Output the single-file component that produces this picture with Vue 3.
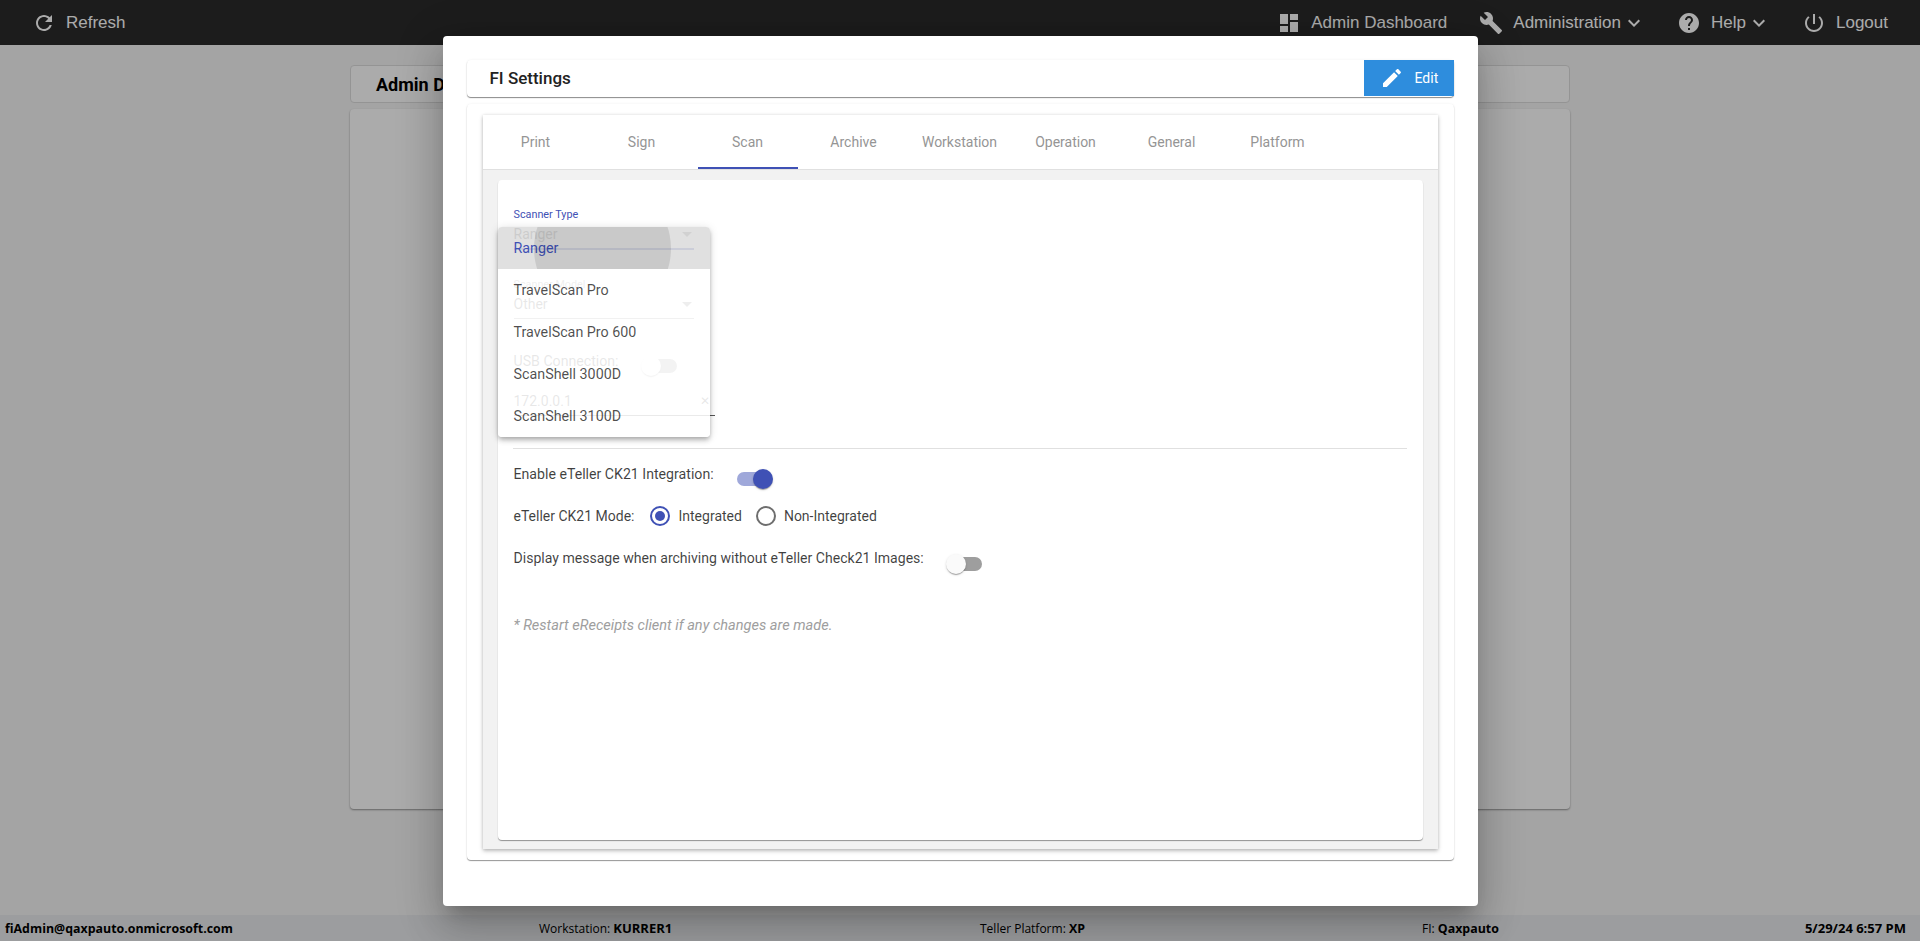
<script setup>
const tabs = ['Print', 'Sign', 'Scan', 'Archive', 'Workstation', 'Operation', 'General', 'Platform']
const scanners = ['Ranger', 'TravelScan Pro', 'TravelScan Pro 600', 'ScanShell 3000D', 'ScanShell 3100D']
</script>

<template>
<div class="page">
  <header class="topbar">
    <div class="nav-item">
      <svg class="icon" viewBox="0 0 24 24"><path d="M17.65 6.35C16.2 4.9 14.21 4 12 4c-4.42 0-7.99 3.58-7.99 8s3.57 8 7.99 8c3.73 0 6.84-2.55 7.73-6h-2.08c-.82 2.33-3.04 4-5.65 4-3.31 0-6-2.69-6-6s2.69-6 6-6c1.66 0 3.14.69 4.22 1.78L13 11h7V4l-2.35 2.35z"/></svg>
      <span>Refresh</span>
    </div>
    <nav class="nav-right">
      <div class="nav-item dash">
        <svg class="icon" viewBox="0 0 24 24"><path d="M3 13h8V3H3v10zm0 8h8v-6H3v6zm10 0h8V11h-8v10zm0-18v6h8V3h-8z"/></svg>
        <span>Admin Dashboard</span>
      </div>
      <div class="nav-item">
        <svg class="icon" viewBox="0 0 24 24"><path d="M22.7 19l-9.1-9.1c.9-2.3.4-5-1.5-6.9-2-2-5-2.4-7.4-1.3L9 6 6 9 1.6 4.7C.4 7.1.9 10.1 2.9 12.1c1.9 1.9 4.6 2.4 6.9 1.5l9.1 9.1c.4.4 1 .4 1.4 0l2.3-2.3c.5-.4.5-1.1.1-1.4z"/></svg>
        <span>Administration</span>
        <svg class="chevron" viewBox="0 0 24 24"><path d="M7.41 8.59L12 13.17l4.59-4.58L18 10l-6 6-6-6 1.41-1.41z"/></svg>
      </div>
      <div class="nav-item">
        <svg class="icon" viewBox="0 0 24 24"><path d="M12 2C6.48 2 2 6.48 2 12s4.48 10 10 10 10-4.48 10-10S17.52 2 12 2zm1 17h-2v-2h2v2zm2.07-7.75l-.9.92C13.45 12.9 13 13.5 13 15h-2v-.5c0-1.1.45-2.1 1.17-2.83l1.24-1.26c.37-.36.59-.86.59-1.41 0-1.1-.9-2-2-2s-2 .9-2 2H8c0-2.21 1.79-4 4-4s4 1.79 4 4c0 .88-.36 1.68-.93 2.25z"/></svg>
        <span>Help</span>
        <svg class="chevron" viewBox="0 0 24 24"><path d="M7.41 8.59L12 13.17l4.59-4.58L18 10l-6 6-6-6 1.41-1.41z"/></svg>
      </div>
      <div class="nav-item">
        <svg class="icon" viewBox="0 0 24 24"><path d="M13 3h-2v10h2V3zm4.83 2.17l-1.42 1.42C17.99 7.86 19 9.81 19 12c0 3.87-3.13 7-7 7s-7-3.13-7-7c0-2.19 1.01-4.14 2.58-5.42L6.17 5.17C4.23 6.82 3 9.26 3 12c0 4.97 4.03 9 9 9s9-4.03 9-9c0-2.74-1.23-5.18-3.17-6.83z"/></svg>
        <span>Logout</span>
      </div>
    </nav>
  </header>

  <main class="content">
    <div class="crumb-card">Admin Dashboard</div>
    <div class="main-card"></div>
  </main>

  <footer class="statusbar">
    <b class="user">fiAdmin@qaxpauto.onmicrosoft.com</b>
    <span>Workstation: <b class="wide">KURRER1</b></span>
    <span>Teller Platform: <b>XP</b></span>
    <span>FI: <b>Qaxpauto</b></span>
    <b class="wide">5/29/24 6:57 PM</b>
  </footer>

  <div class="overlay">
    <section class="modal">
      <div class="title-card">
        <h2>FI Settings</h2>
        <button class="edit-btn">
          <svg viewBox="0 0 24 24"><path d="M3 17.25V21h3.75L17.81 9.94l-3.75-3.75L3 17.25zM20.71 7.04c.39-.39.39-1.02 0-1.41l-2.34-2.34c-.39-.39-1.02-.39-1.41 0l-1.83 1.83 3.75 3.75 1.83-1.83z"/></svg>
          Edit
        </button>
      </div>

      <div class="settings-card">
        <div class="tab-card">
          <div class="tabs">
            <div v-for="t in tabs" :key="t" class="tab" :class="{ active: t === 'Scan' }">{{ t }}</div>
          </div>
          <div class="tab-body">
            <div class="form-card">
              <div class="field">
                <div class="field-label blue">Scanner Type</div>
                <div class="field-value">Ranger<i class="arrow"></i></div>
                <div class="line blue-line"></div>
              </div>
              <div class="field second">
                <div class="field-label">Scanner Model</div>
                <div class="field-value">Other<i class="arrow"></i></div>
                <div class="line"></div>
              </div>
              <div class="row usb">
                <span>USB Connection:</span>
                <span class="toggle"><i class="thumb"></i></span>
              </div>
              <div class="ip-field">
                <div class="field-value">172.0.0.1<span class="clear">✕</span></div>
                <div class="line dark"></div>
              </div>

              <div class="divider"></div>

              <div class="row enable">
                <span>Enable eTeller CK21 Integration:</span>
                <span class="toggle on"><i class="thumb"></i></span>
              </div>
              <div class="row mode">
                <span>eTeller CK21 Mode:</span>
                <span class="radio checked"></span>
                <span>Integrated</span>
                <span class="radio second-radio"></span>
                <span class="radio-text">Non-Integrated</span>
              </div>
              <div class="row archive">
                <span>Display message when archiving without eTeller Check21 Images:</span>
                <span class="toggle"><i class="thumb"></i></span>
              </div>
              <p class="note">* Restart eReceipts client if any changes are made.</p>

              <div class="dropdown">
                <div v-for="(s, i) in scanners" :key="s" class="option" :class="{ selected: i === 0 }">
                  {{ s }}
                  <i v-if="i === 0" class="ripple"></i>
                </div>
              </div>
            </div>
          </div>
        </div>
      </div>
    </section>
  </div>
</div>
</template>

<style>
html, body { margin: 0; }
body { overflow: hidden; }
</style>

<style scoped>
* { box-sizing: border-box; }

.page {
  height: 941px;
  display: flex;
  flex-direction: column;
  background: #f5f5f5;
  font-family: Roboto, sans-serif;
  position: relative;
  overflow: hidden;
}

.topbar {
  height: 45px;
  flex: none;
  background: #2b2b2b;
  color: #fff;
  display: flex;
  align-items: center;
  justify-content: space-between;
  padding: 0 32px;
  font-family: "Liberation Sans", sans-serif;
  font-size: 17px;
}

.nav-right {
  display: flex;
  gap: 31px;
}

.nav-item {
  display: flex;
  align-items: center;
  gap: 10px;
}

.nav-item.dash {
  margin-right: 1px;
}

.icon {
  width: 24px;
  height: 24px;
  fill: #fff;
  flex: none;
}

.chevron {
  width: 24px;
  height: 24px;
  fill: #fff;
  flex: none;
  margin-left: -9px;
}

.content {
  flex: 1;
  width: 1220px;
  margin: 0 auto;
  padding-top: 20px;
}

.crumb-card {
  height: 38px;
  background: #fff;
  border: 1px solid #ddd;
  border-radius: 4px;
  padding-left: 25px;
  line-height: 38px;
  font-size: 18px;
  font-weight: 700;
  color: #000;
}

.main-card {
  height: 700px;
  margin-top: 6px;
  background: #fff;
  border-radius: 4px;
  box-shadow: 0 1px 2px rgba(0,0,0,0.4);
}

.statusbar {
  height: 26px;
  flex: none;
  background: #e9ebee;
  display: grid;
  grid-template-columns: 534px 441px 442px 1fr auto;
  align-items: center;
  padding: 0 14px 0 5px;
  font-family: "Open Sans", sans-serif;
  font-size: 12px;
  color: #000;
}

.statusbar b {
  font-size: 12.4px;
}

.statusbar b.wide {
  font-size: 13px;
}

.overlay {
  position: absolute;
  inset: 0;
  background: rgba(0,0,0,0.33);
  display: flex;
  justify-content: center;
  align-items: flex-start;
  padding-top: 36px;
}

.modal {
  width: 1035px;
  height: 870px;
  background: #fff;
  border-radius: 4px;
  padding: 24px;
  box-shadow: 0 11px 15px -7px rgba(0,0,0,0.2), 0 24px 38px 3px rgba(0,0,0,0.14), 0 9px 46px 8px rgba(0,0,0,0.12);
}

.title-card {
  height: 37px;
  display: flex;
  align-items: flex-start;
  justify-content: space-between;
  border-radius: 4px;
  box-shadow: 0 1px 1px rgba(0,0,0,0.45), 0 0 3px rgba(0,0,0,0.06);
}

.title-card h2 {
  margin: 0;
  padding-left: 23px;
  font-size: 17px;
  font-weight: 500;
  line-height: 36px;
  color: #222;
}

.edit-btn {
  width: 90px;
  height: 36px;
  border: none;
  background: #2e8ddd;
  color: #fff;
  font-family: Roboto, sans-serif;
  font-size: 14px;
  display: flex;
  align-items: center;
  gap: 11px;
  padding: 0 0 0 16px;
}

.edit-btn svg {
  width: 24px;
  height: 24px;
  fill: #fff;
  flex: none;
}

.settings-card {
  height: 756px;
  margin-top: 7px;
  padding: 11px 16px;
  border-radius: 4px;
  box-shadow: 0 1px 1px rgba(0,0,0,0.4), 0 0 3px rgba(0,0,0,0.06);
}

.tab-card {
  height: 734px;
  display: flex;
  flex-direction: column;
  box-shadow: 0 2px 4px rgba(0,0,0,0.25), 0 0 3px rgba(0,0,0,0.1);
}

.tabs {
  height: 55px;
  flex: none;
  display: flex;
  border-bottom: 1px solid #e0e0e0;
}

.tab {
  width: 106px;
  display: flex;
  align-items: center;
  justify-content: center;
  font-size: 14px;
  color: #959595;
  position: relative;
  padding-bottom: 1px;
}

.tab.active::after {
  content: '';
  position: absolute;
  left: 3px;
  right: 3px;
  bottom: 0;
  height: 2px;
  background: #3f51b5;
}

.tab-body {
  flex: 1;
  background: #f2f2f2;
  padding: 10px 15px 9px;
}

.form-card {
  height: 660px;
  background: #fff;
  border-radius: 4px;
  padding: 28px 16px 0;
  box-shadow: 0 1px 1px rgba(0,0,0,0.4);
  position: relative;
  font-size: 14.15px;
  color: rgba(0,0,0,0.75);
}

.field {
  width: 180px;
}

.field.second {
  margin-top: 28px;
}

.field-label {
  font-size: 10.8px;
  line-height: 14px;
  color: #777;
}

.field-label.blue {
  color: #3f51b5;
}

.field-value {
  margin-top: 2px;
  line-height: 20px;
  font-size: 14px;
  position: relative;
}

.arrow {
  position: absolute;
  right: 2px;
  top: 8px;
  border-left: 5px solid transparent;
  border-right: 5px solid transparent;
  border-top: 5px solid #777;
}

.line {
  height: 1px;
  margin-top: 4px;
  background: #888;
}

.blue-line {
  background: #3f51b5;
  height: 2px;
}

.line.dark {
  background: #555;
}

.row {
  display: flex;
  align-items: flex-start;
  line-height: 20px;
}

.row.usb {
  margin-top: 32px;
}

.row.enable .toggle {
  margin-left: 23px;
}

.ip-field {
  width: 201px;
  margin-top: 18px;
}

.clear {
  position: absolute;
  right: 5px;
  top: 0;
  font-size: 12px;
}

.divider {
  height: 1px;
  margin: 32px 0 15px -1px;
  background: #e0e0e0;
}

.toggle {
  width: 34px;
  height: 14px;
  margin: 8px 0 0 24px;
  border-radius: 7px;
  background: #9e9e9e;
  position: relative;
  flex: none;
}

.toggle.on {
  background: #9fa8da;
}

.thumb {
  position: absolute;
  left: -2px;
  top: -3px;
  width: 20px;
  height: 20px;
  border-radius: 50%;
  background: #fafafa;
  box-shadow: 0 2px 1px -1px rgba(0,0,0,0.2), 0 1px 1px rgba(0,0,0,0.14), 0 1px 3px rgba(0,0,0,0.12);
}

.toggle.on .thumb {
  left: 16px;
  background: #3f51b5;
}

.row.mode {
  margin-top: 20px;
  align-items: center;
  font-size: 14px;
}

.radio {
  width: 20px;
  height: 20px;
  flex: none;
  margin: 0 9px 0 15px;
  border: 2px solid #6e6e6e;
  border-radius: 50%;
  position: relative;
}

.radio.second-radio {
  margin: 0 8px 0 14px;
}

.radio.checked {
  border-color: #3f51b5;
}

.radio.checked::after {
  content: '';
  position: absolute;
  inset: 3px;
  border-radius: 50%;
  background: #3f51b5;
}

.row.archive {
  margin-top: 22px;
  font-size: 14.07px;
}

.row.archive .toggle {
  margin-top: 9px;
}

.note {
  margin: 45px 0 0;
  line-height: 20px;
  font-size: 14.55px;
  font-style: italic;
  color: #9e9e9e;
}

.dropdown {
  position: absolute;
  left: 0;
  top: 47px;
  width: 212px;
  background: rgba(255,255,255,0.88);
  border-radius: 4px;
  overflow: hidden;
  box-shadow: 0 2px 4px -1px rgba(0,0,0,0.2), 0 4px 5px rgba(0,0,0,0.14), 0 1px 10px rgba(0,0,0,0.12);
}

.option {
  height: 42px;
  line-height: 42px;
  padding-left: 16px;
  font-size: 14.3px;
  color: rgba(0,0,0,0.7);
  position: relative;
  overflow: hidden;
}

.option.selected {
  background: rgba(0,0,0,0.12);
  color: #3f51b5;
}

.ripple {
  position: absolute;
  left: 36px;
  top: -47px;
  width: 137px;
  height: 137px;
  border-radius: 50%;
  background: rgba(0,0,0,0.1);
}
</style>
